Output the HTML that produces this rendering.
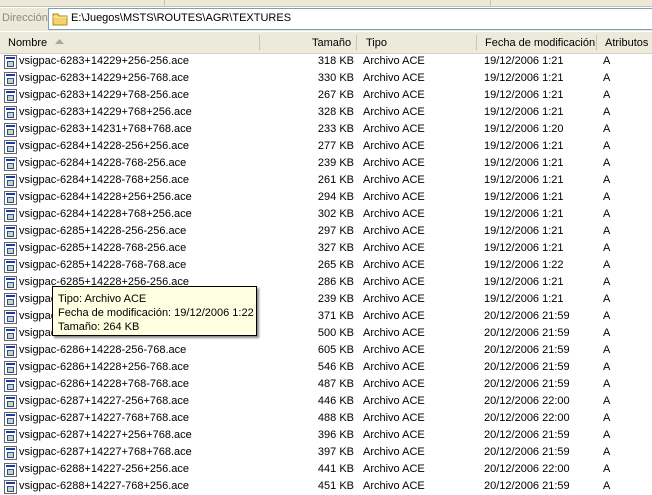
<!DOCTYPE html><html><head><style>
body{margin:0;width:652px;height:492px;overflow:hidden;background:#fff;font-family:"Liberation Sans",sans-serif;font-size:11px;color:#000;position:relative}
.top{position:absolute;left:0;top:0;width:652px;height:31px;background:#ece9d8}
.tb{position:absolute;top:0;height:6px;border-left:1px solid #c8c4b4}
.addr{position:absolute;left:48px;top:8px;width:610px;height:20px;border:1px solid #7f9db9;background:#fff}
.hdr{position:absolute;left:0;top:31px;width:652px;height:21px;background:#ebeadb;border-bottom:1px solid #d6d2c2;border-top:1px solid #fff}
.hdr span{position:absolute;top:5px}
.dv{position:absolute;top:3px;height:15px;border-left:1px solid #c7c5b2}
.row{position:absolute;left:0;height:17px;width:652px;line-height:17px}
.row span{position:absolute;top:0;white-space:nowrap}
.ic{position:absolute;left:4px;top:2px;width:11px;height:12px;border:1px solid #666;background:#fff}
.ic:before{content:"";position:absolute;left:1px;top:1px;width:9px;height:2px;background:#1a3aa8}
.ic:after{content:"";position:absolute;left:2px;top:5px;width:5px;height:4px;border:1px solid #2a4ab0;background:#c8d8a8}
.tip{position:absolute;left:52px;top:286px;width:205px;height:50px;background:#ffffe1;border:1px solid #000;box-shadow:2px 2px 2px #888;line-height:14px;padding:5px 0 0 5px;box-sizing:border-box}
</style></head><body>
<div class="top">
<div class="tb" style="left:164px"></div><div class="tb" style="left:490px"></div>
<div style="position:absolute;left:0;top:6px;width:652px;border-top:1px solid #c8c4b4;border-bottom:1px solid #fff"></div>
<span style="position:absolute;left:2px;top:12px;color:#8c8a80">Dirección</span>
<div class="addr">
<svg style="position:absolute;left:3px;top:2px" width="16" height="15"><path d="M1 3h5l1 2h8v9H1z" fill="#f3d36a" stroke="#b08a20"/><path d="M1 6h14" stroke="#fff3b0"/></svg>
<span style="position:absolute;left:22px;top:3px">E:\Juegos\MSTS\ROUTES\AGR\TEXTURES</span></div>
</div>
<div class="hdr">
<span style="left:8px">Nombre</span>
<svg style="position:absolute;left:55px;top:7px" width="9" height="5"><path d="M0 5L4.5 0L9 5z" fill="#aca899"/></svg>
<div class="dv" style="left:259px"></div>
<span style="left:312px">Tamaño</span><div class="dv" style="left:356px"></div>
<span style="left:366px">Tipo</span><div class="dv" style="left:476px"></div>
<span style="left:485px">Fecha de modificación</span><div class="dv" style="left:596px"></div>
<span style="left:605px">Atributos</span>
</div>
<div id="rows"></div>
<script>
var d=[["6283+14229+256-256","318","19/12/2006 1:21"],["6283+14229+256-768","330","19/12/2006 1:21"],["6283+14229+768-256","267","19/12/2006 1:21"],["6283+14229+768+256","328","19/12/2006 1:21"],["6283+14231+768+768","233","19/12/2006 1:20"],["6284+14228-256+256","277","19/12/2006 1:21"],["6284+14228-768-256","239","19/12/2006 1:21"],["6284+14228-768+256","261","19/12/2006 1:21"],["6284+14228+256+256","294","19/12/2006 1:21"],["6284+14228+768+256","302","19/12/2006 1:21"],["6285+14228-256-256","297","19/12/2006 1:21"],["6285+14228-768-256","327","19/12/2006 1:21"],["6285+14228-768-768","265","19/12/2006 1:22"],["6285+14228+256-256","286","19/12/2006 1:21"],["6285+14228+256-768","239","19/12/2006 1:21"],["6285+14228+768-256","371","20/12/2006 21:59"],["6286+14228+256+256","500","20/12/2006 21:59"],["6286+14228-256-768","605","20/12/2006 21:59"],["6286+14228+256-768","546","20/12/2006 21:59"],["6286+14228+768-768","487","20/12/2006 21:59"],["6287+14227-256+768","446","20/12/2006 22:00"],["6287+14227-768+768","488","20/12/2006 22:00"],["6287+14227+256+768","396","20/12/2006 21:59"],["6287+14227+768+768","397","20/12/2006 21:59"],["6288+14227-256+256","441","20/12/2006 22:00"],["6288+14227-768+256","451","20/12/2006 21:59"]];
var h="";d.forEach(function(r,i){h+='<div class="row" style="top:'+(53+i*17)+'px"><div class="ic"></div><span style="left:19px">vsigpac-'+r[0]+'.ace</span><span style="right:298px">'+r[1]+' KB</span><span style="left:363px">Archivo ACE</span><span style="left:484px">'+r[2]+'</span><span style="left:603px">A</span></div>'});
document.getElementById("rows").innerHTML=h;
</script>
<div class="tip">Tipo: Archivo ACE<br>Fecha de modificación: 19/12/2006 1:22<br>Tamaño: 264 KB</div>
</body></html>
